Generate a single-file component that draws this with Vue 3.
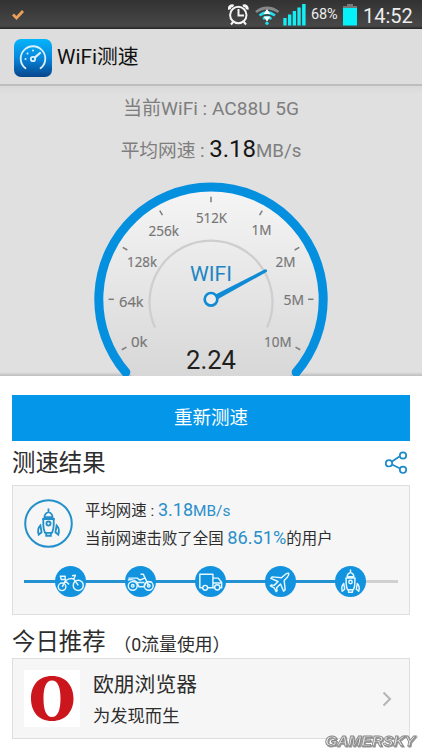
<script setup>
const cx = 211
const cy = 213.3
const ticks = [-119.5, -90, -59.5, -30, 0, 30, 59.5, 90, 119.5]
const labels = [
  { t: '0k', x: 131, y: 260.5, w: 16.5 },
  { t: '64k', x: 119, y: 221, w: 24.5 },
  { t: '128k', x: 127, y: 181, w: 30 },
  { t: '256k', x: 148.5, y: 149.5, w: 30.5 },
  { t: '512K', x: 196, y: 137, w: 31 },
  { t: '1M', x: 251.5, y: 149, w: 20 },
  { t: '2M', x: 275.5, y: 181, w: 20 },
  { t: '5M', x: 283.5, y: 218.5, w: 20.5 },
  { t: '10M', x: 264, y: 260.5, w: 27.5 }
]
const nodes = ['bike', 'moto', 'truck', 'plane', 'rocket']
</script>

<template>
  <main class="phone">
    <header class="status">
      <svg class="check" width="14" height="12" viewBox="0 0 14 12"><path d="M2 5.5 5.5 9 12 2" /></svg>
      <div class="tray">
        <svg class="tray-icons" width="80" height="28" viewBox="228 0 80 28">
          <g fill="none" stroke="#f4f4f4" stroke-width="2">
            <circle cx="238.3" cy="15" r="8.2" />
            <path d="M238.500 9v6.500h5.500M233.500 21.500l-2.500 3M243.500 21.500l2.500 3" />
            <path d="M229.600 9.500c-.8-2.500 1.600-4.600 4-3.500M247 9.500c.8-2.500-1.600-4.600-4-3.500" stroke-width="3" />
          </g>
          <g fill="none" stroke-width="2.700">
            <path d="M256 12Q267 4 278.500 12" stroke="#85898b" />
            <path d="M259.500 15.500Q267 9.500 275 15.500" stroke="#22dce9" />
            <path d="M263 19Q267 15.500 271.500 19" stroke="#22dce9" />
          </g>
          <path d="M267 9l3.500 5h-7zM267 21.500l3.500-5h-7z" fill="#fff" />
          <circle cx="267" cy="23.300" r="1.700" fill="#22dce9" />
          <path d="M283.300 18h3.300v7.500h-3.300zM288 14.500h3.300v11H288zM292.700 11h3.300v14.500h-3.300zM297.400 7.500h3.300v18h-3.300zM302.100 4h3.500v21.500h-3.500z" fill="#13edf5" />
        </svg>
        <span class="percent">68%</span>
        <svg class="battery" width="16" height="24" viewBox="0 0 16 24"><path d="M5 1h6v2h4v3H1V3h4z" fill="#777" /><path d="M1 5h14v17.500H1z" fill="#05f2fa" /></svg>
        <span class="clock">14:52</span>
      </div>
    </header>

    <div class="appbar">
      <svg width="38" height="38" viewBox="0 0 38 38">
        <defs><linearGradient id="ic" x2="0" y2="1"><stop stop-color="#04b5fb" /><stop offset=".5" stop-color="#0787dc" /><stop offset="1" stop-color="#06458b" /></linearGradient></defs>
        <rect width="38" height="38" rx="7" fill="url(#ic)" />
        <g fill="none" stroke="#d9f1fb" stroke-width="1.800" stroke-linecap="round">
          <path d="M11.500 29.300A12.300 12.300 0 1 1 26.500 29.300" />
          <circle cx="19" cy="20" r="2.200" /><path d="M21 18.300l5-4.300" stroke-width="2.300" />
        </g>
        <g fill="#d9f1fb"><circle cx="11.500" cy="20" r="1" /><circle cx="13.500" cy="14.500" r="1" /><circle cx="19" cy="11.500" r="1" /></g>
      </svg>
      <h1>WiFi测速</h1>
    </div>

    <section class="meter">
      <p class="network">当前WiFi : AC88U 5G</p>
      <p class="average">平均网速 : <b>3.18</b>MB/s</p>
      <svg class="gauge" width="422" height="290" viewBox="0 0 422 290">
        <defs><linearGradient id="dial" x2="0" y2="1"><stop stop-color="#f5f5f5" /><stop offset="1" stop-color="#d2d2d2" /></linearGradient></defs>
        <circle :cx="cx" :cy="cy" r="110" fill="url(#dial)" />
        <path d="M125.800 286.300A112.200 112.200 0 1 1 296.200 286.300" fill="none" stroke="#048fdf" stroke-width="9" stroke-linecap="round" />
        <path d="M155 241.500A61.500 61.500 0 1 1 267 241.500" fill="none" stroke="#cecece" stroke-width="2.300" />
        <path v-for="a in ticks" :key="a" d="M211 110.800v5.400" :transform="`rotate(${a} ${cx} ${cy})`" stroke="#7d7d7d" stroke-width="1.500" />
        <text v-for="l in labels" :key="l.t" :x="l.x" :y="l.y" :textLength="l.w" lengthAdjust="spacingAndGlyphs" class="scale">{{ l.t }}</text>
        <text x="190" y="195" textLength="42" lengthAdjust="spacingAndGlyphs" class="wifi">WIFI</text>
        <path d="M215.500 208.500 265 183.300Q268.500 184 266.500 186L218 213z" fill="#0f8ad4" />
        <circle :cx="cx" :cy="cy" r="6.300" fill="#ececec" stroke="#0f8ad4" stroke-width="2.700" />
        <text x="186" y="282.500" textLength="50" lengthAdjust="spacingAndGlyphs" class="reading">2.24</text>
      </svg>
    </section>

    <section class="content">
      <button class="retest">重新测速</button>
      <div class="heading">
        <h2>测速结果</h2>
        <svg class="share" width="23" height="24" viewBox="0 0 23 24"><path d="M7 10.500 14.500 5.500M7 13.500l8 4" /><circle cx="4" cy="12.300" r="3.200" /><circle cx="18" cy="4.500" r="3.200" /><circle cx="18" cy="18.800" r="3.200" /></svg>
      </div>

      <svg class="sprites" width="0" height="0">
        <symbol id="bike" viewBox="0 0 32 32">
          <circle cx="7.300" cy="21.500" r="3.900" /><circle cx="24" cy="20" r="5.200" /><path d="M7.500 21.500 10.500 15.500q5-4 9-2l4.500 6.500M17.500 10l3.500-.5-1.500 4M5.500 10.500h5V14H6.500zM10.500 15.500l4 3.500" />
        </symbol>
        <symbol id="moto" viewBox="0 0 32 32">
          <circle cx="8" cy="20.500" r="4.600" /><circle cx="24.500" cy="20.500" r="4.600" /><circle cx="8" cy="20.500" r="1.300" /><circle cx="24.500" cy="20.500" r="1.300" /><path d="M3 14.500q6-1.500 9 2l2.500 5h5l3-5.500 5 .5M3.500 12.500h9l3 2 5-2-1.500-4h-3M20 11l4.500 9M13 17h7" />
        </symbol>
        <symbol id="truck" viewBox="0 0 32 32">
          <path d="M8 22.500H5V8.500h13.500v14H13M18.500 12.500h5.500l3.500 4.500v5.500h-2M18.500 17.500h8.500M18.500 22.500h2" /><circle cx="10.500" cy="22.500" r="2.500" /><circle cx="23" cy="22" r="2.700" />
        </symbol>
        <symbol id="plane" viewBox="0 0 32 32">
          <path d="M24.500 7.500q-2-.5-4 1.500l-3.500 3.200-9.500-1-1.500 1.600 7.500 3.200-4 4-3-.5-1 1 4 2 2 4 1-1-.5-3 4-4 3.200 7.500 1.600-1.500-1-9.500 3.200-3.500q2-2 1.500-4z" />
        </symbol>
        <symbol id="rocket" viewBox="0 0 32 32">
          <path d="M16 3.500v3.500M12.500 11q0-3 3.500-4.500 3.500 1.500 3.500 4.500zM10.500 12.500h11M11.500 12.500v5q0 4 1.500 7h6q1.500-3 1.500-7v-5M14 24.500V27h4v-2.500M9 18q-3 3-1.500 8l2.500-2zM23 18q3 3 1.500 8L22 24z" /><circle cx="16" cy="16.500" r="1.800" />
        </symbol>
      </svg>

      <article class="card result">
        <div class="summary">
          <svg class="badge" width="49" height="49" viewBox="0 0 49 49"><circle cx="24.500" cy="24.500" r="23.300" /><use href="#rocket" x="6" y="5.500" width="37" height="37" /></svg>
          <div class="facts">
            <p>平均网速 : <em><span class="big">3.18</span>MB/s</em></p>
            <p>当前网速击败了全国 <em class="rate">86.51%</em>的用户</p>
          </div>
        </div>
        <div class="track">
          <span v-for="n in nodes" :key="n" class="node"><svg width="31" height="31" viewBox="0 0 32 32"><use :href="'#' + n" width="32" height="32" /></svg></span>
        </div>
      </article>

      <div class="heading today"><h2>今日推荐</h2><span>（0流量使用）</span></div>
      <article class="card promo">
        <svg class="opera" width="56" height="57" viewBox="0 0 56 57"><path fill="#fff" d="M0 0h56v57H0z" /><path fill="#cb161d" fill-rule="evenodd" d="M28 6C14 6 7 16 7 28.500S14 51 28 51s21.500-10 21.500-22.500S42 6 28 6zm0 4.500c6 0 8.500 7 8.500 18S34 47 28 47s-8.500-7.500-8.500-18.500 2.500-18 8.500-18z" /></svg>
        <div class="promo-text"><h3>欧朋浏览器</h3><p>为发现而生</p></div>
        <svg class="chevron" width="10" height="16" viewBox="0 0 10 16"><path d="M1.500 1.500 8 8l-6.500 6.500" /></svg>
      </article>
      <svg class="watermark" width="98" height="20" viewBox="0 0 98 20"><text x="3" y="15.500" textLength="90" lengthAdjust="spacingAndGlyphs">GAMERSKY</text></svg>
    </section>
  </main>
</template>

<style>
body { margin: 0; overflow: hidden; }
</style>

<style scoped>
* { box-sizing: border-box; }
p, h1, h2, h3 { margin: 0; font-weight: 400; white-space: nowrap; }
em { font-style: normal; }
.phone { position: relative; width: 422px; height: 751px; overflow: hidden; background: #fff; color: #2d2d2d; font-family: Roboto, "Noto Sans CJK SC", sans-serif; }
.status { height: 29px; display: flex; justify-content: space-between; background: linear-gradient(#323232, #484848 90%, #222 100%); padding: 0 9px 0 11px; color: #ededed; }
.check { margin-top: 9px; fill: none; stroke: #eda05a; stroke-width: 2.7; }
.tray { display: flex; }
.percent { width: 31px; padding-left: 3px; font-size: 14.5px; line-height: 30px; letter-spacing: -.1px; }
.battery { margin: 3px 0 0 3px; }
.clock { width: 55px; padding-left: 5px; font-size: 20px; line-height: 32px; }
.appbar { height: 57px; display: flex; padding: 10px 14px; gap: 5px; background: #dddddd; border-bottom: 2px solid #bdbdbd; color: #111; }
h1 { font-size: 20.8px; line-height: 37px; }
.meter { position: relative; height: 290px; padding-top: 8px; background: linear-gradient(#d9d9d9, #e0e0e0 8px, #e0e0e0 286px, #bdbdbd); text-align: center; color: #7e7e7e; }
.network { font-size: 19.1px; line-height: 30px; }
.average { margin-top: 8px; font-size: 18.7px; line-height: 34px; }
.average b { font-size: 24px; font-weight: 400; color: #151515; }
.gauge { position: absolute; left: 0; top: 0; }
.scale { font: 14px "Open Sans", sans-serif; fill: #757575; stroke: #757575; stroke-width: .2; }
.wifi { font-size: 21px; fill: #1b86c5; }
.reading { font-size: 26px; fill: #1f1f1f; }
.content { padding: 19px 12px 0; }
.retest { display: block; width: 398px; height: 46px; padding: 0; border: 0; background: #0496e9; color: #fff; font: 18.5px/47px Roboto, "Noto Sans CJK SC", sans-serif; }
.heading { height: 44px; display: flex; justify-content: space-between; }
h2 { font-size: 23.4px; line-height: 45px; }
.share { margin: 10px 2px 0 0; fill: none; stroke: #1c8bc9; stroke-width: 1.7; }
.sprites { display: block; }
.card { border: 1px solid #dedede; background: #f6f6f6; }
.result { height: 130px; padding: 13px 11px 0; }
.summary { height: 54px; display: flex; gap: 12px; }
.badge { fill: none; stroke: #2490ca; stroke-width: 2; }
.badge use { stroke-width: 1.6; }
.facts p { font-size: 15.4px; line-height: 28px; }
.facts { margin-top: -3px; }
.facts p + p { margin-top: -1px; }
.facts em { color: #2b8fc9; }
.big { font-size: 18px; }
.facts .rate { font-size: 18.2px; }
.track { height: 31px; margin-top: 13px; display: flex; gap: 39px; padding-left: 31px; background: linear-gradient(90deg, #2492d0 342px, #d0d0d0 342px) 0 14px / 374px 3px no-repeat; }
.node { width: 31px; height: 31px; border-radius: 50%; background: #1293df; }
.node svg { display: block; fill: none; stroke: #e5f8ff; stroke-width: 1.5; stroke-linejoin: round; }
.today { height: 43px; justify-content: flex-start; }
.today h2 { line-height: 55px; }
.today span { margin-left: 8px; font-size: 17.8px; line-height: 59px; }
.promo { height: 81px; display: flex; padding: 11px 17px 0 11px; }
.promo-text { flex: 1; padding-left: 13px; }
h3 { font-size: 20.8px; line-height: 30px; }
.promo-text p { font-size: 17.3px; line-height: 33px; }
.chevron { margin-top: 21px; fill: none; stroke: #b5b5b5; stroke-width: 2; }
.watermark { position: absolute; left: 322px; top: 730px; font: italic 900 15px "Liberation Sans", sans-serif; fill: #e2e2e2; stroke: #868686; stroke-width: .8; filter: drop-shadow(1px 1px 0 #999); }
</style>
